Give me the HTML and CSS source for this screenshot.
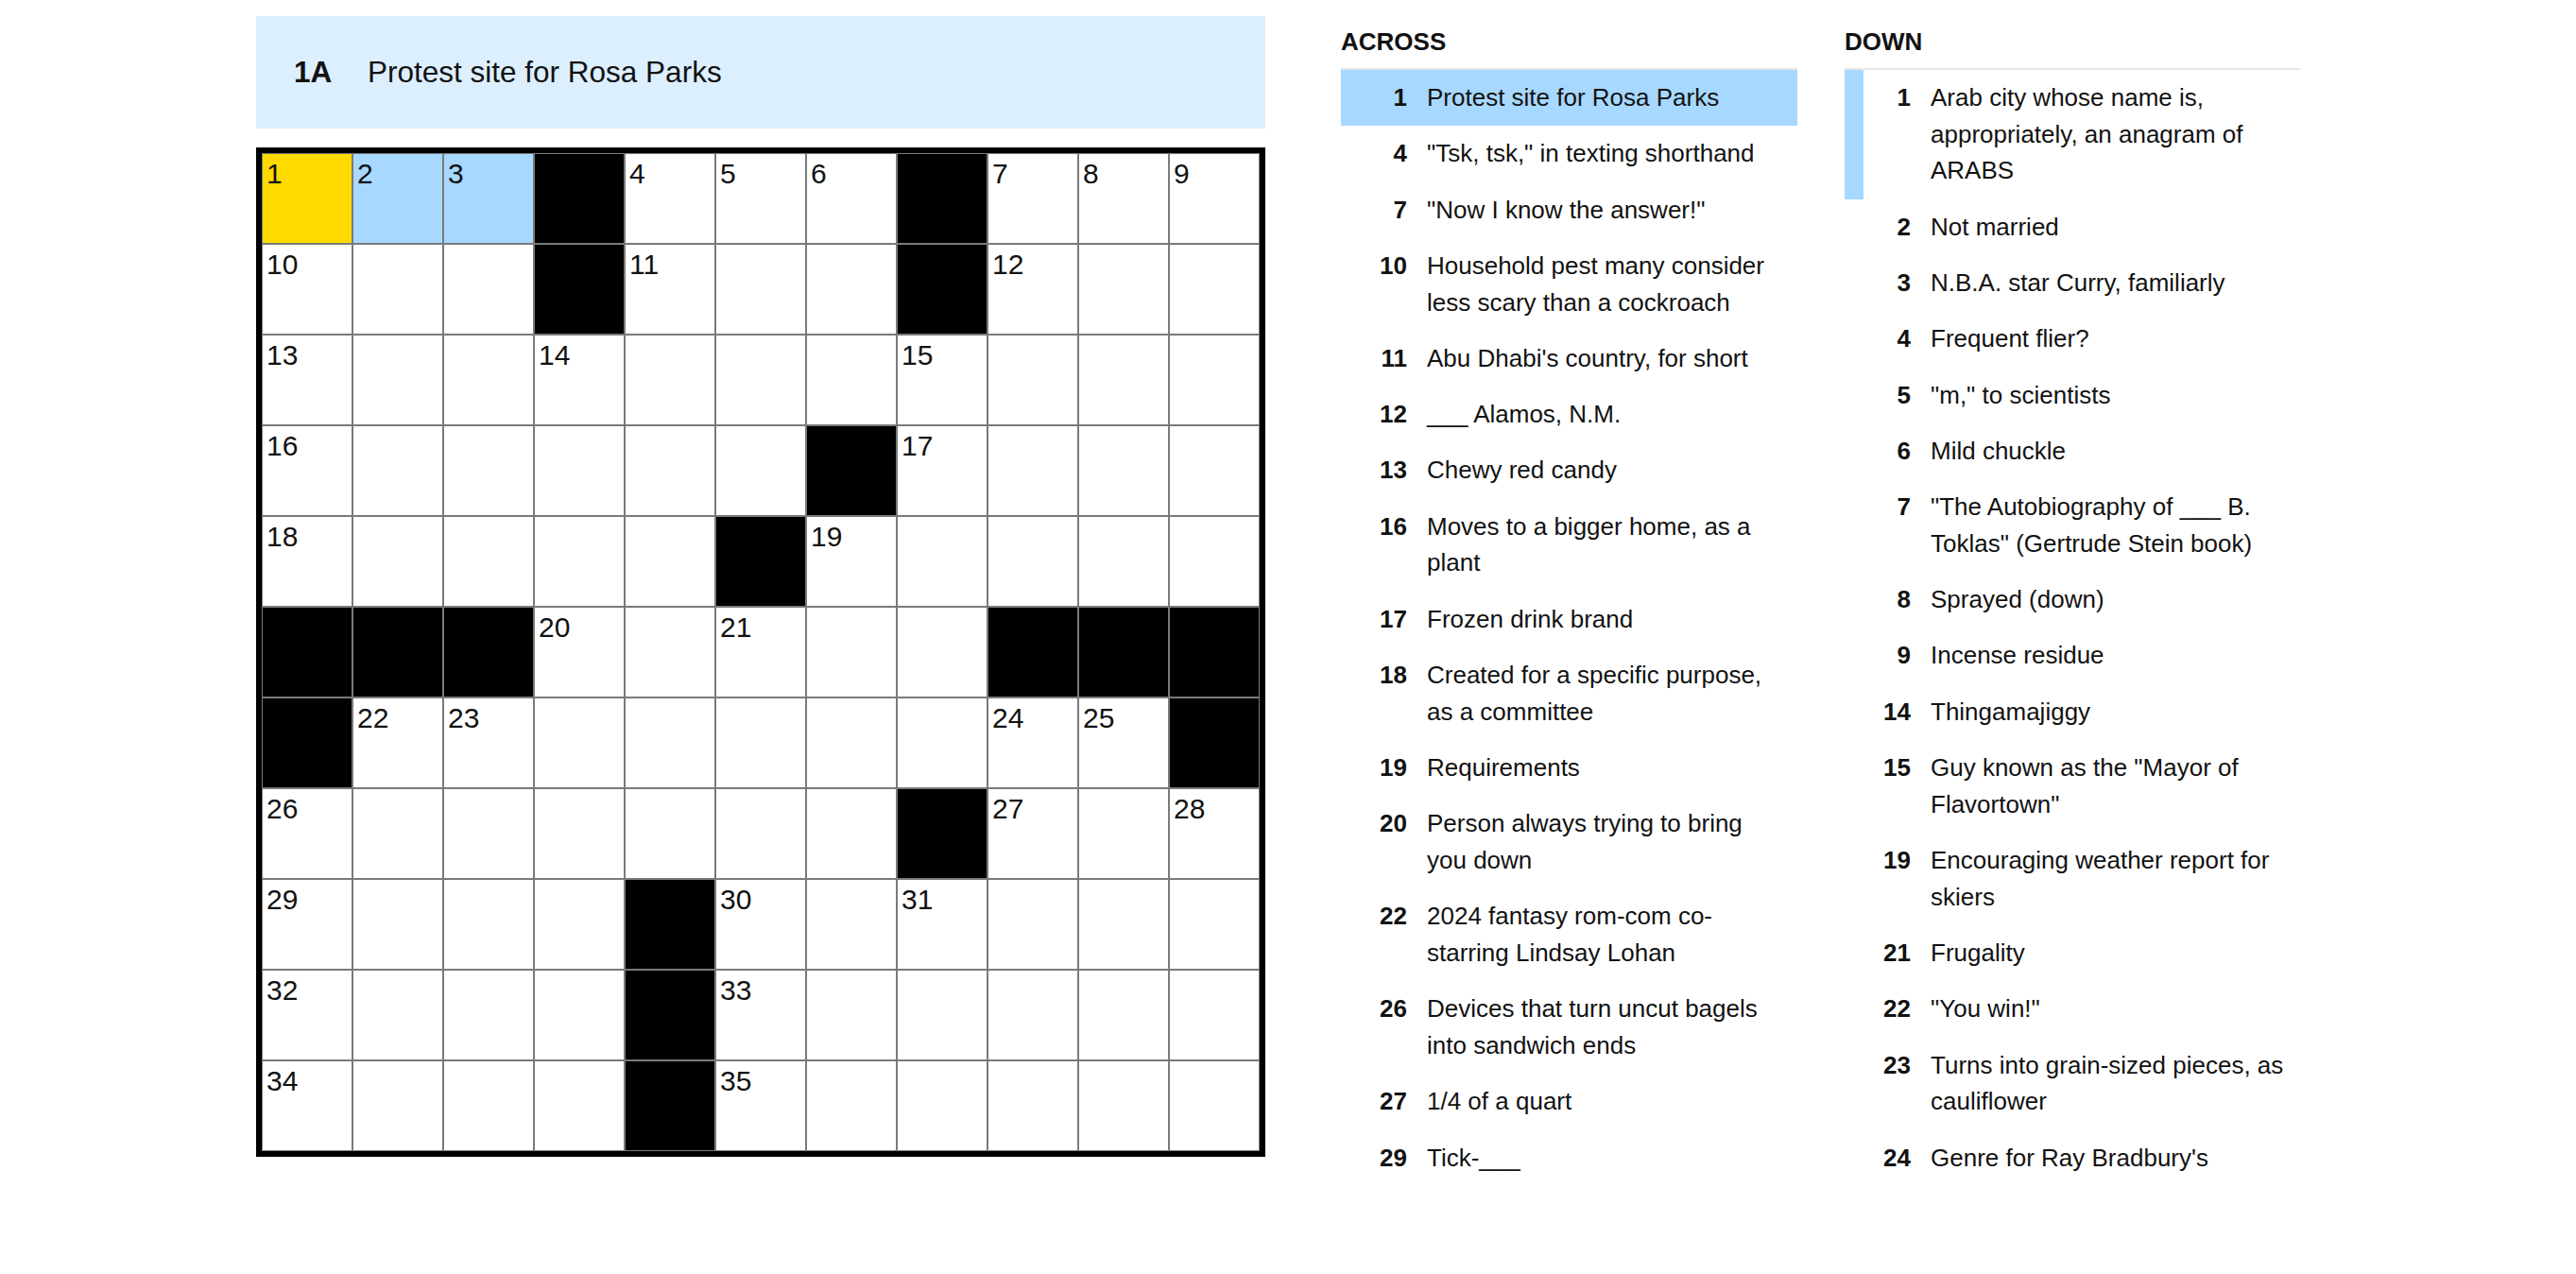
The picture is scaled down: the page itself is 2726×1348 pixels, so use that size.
FILE: index.html
```html
<!DOCTYPE html>
<html lang="en">
<head>
    <meta charset="UTF-8">
    <meta name="viewport" content="width=device-width, initial-scale=1.0">
    <title>Crossword</title>

    <link rel="stylesheet" href="styles.css">
</head>
<body>
    <div class="layout">
        <div class="board">
            <div class="clue-bar">
                <span class="clue-bar-num">1A</span>
                <span class="clue-bar-text">Protest site for Rosa Parks</span>
            </div>
            <div class="grid" id="grid"></div>
        </div>

        <section class="clue-list">
            <h3>ACROSS</h3>
            <ol>
                <li class="selected"><span class="num">1</span><span class="text">Protest site for Rosa Parks</span></li>
                <li><span class="num">4</span><span class="text">"Tsk, tsk," in texting shorthand</span></li>
                <li><span class="num">7</span><span class="text">"Now I know the answer!"</span></li>
                <li><span class="num">10</span><span class="text">Household pest many consider less scary than a cockroach</span></li>
                <li><span class="num">11</span><span class="text">Abu Dhabi's country, for short</span></li>
                <li><span class="num">12</span><span class="text">___ Alamos, N.M.</span></li>
                <li><span class="num">13</span><span class="text">Chewy red candy</span></li>
                <li><span class="num">16</span><span class="text">Moves to a bigger home, as a plant</span></li>
                <li><span class="num">17</span><span class="text">Frozen drink brand</span></li>
                <li><span class="num">18</span><span class="text">Created for a specific purpose, as a committee</span></li>
                <li><span class="num">19</span><span class="text">Requirements</span></li>
                <li><span class="num">20</span><span class="text">Person always trying to bring you down</span></li>
                <li><span class="num">22</span><span class="text">2024 fantasy rom-com co-starring Lindsay Lohan</span></li>
                <li><span class="num">26</span><span class="text">Devices that turn uncut bagels into sandwich ends</span></li>
                <li><span class="num">27</span><span class="text">1/4 of a quart</span></li>
                <li><span class="num">29</span><span class="text">Tick-___</span></li>
            </ol>
        </section>

        <section class="clue-list">
            <h3>DOWN</h3>
            <ol>
                <li class="crossing"><span class="num">1</span><span class="text">Arab city whose name is, appropriately, an anagram of ARABS</span></li>
                <li><span class="num">2</span><span class="text">Not married</span></li>
                <li><span class="num">3</span><span class="text">N.B.A. star Curry, familiarly</span></li>
                <li><span class="num">4</span><span class="text">Frequent flier?</span></li>
                <li><span class="num">5</span><span class="text">"m," to scientists</span></li>
                <li><span class="num">6</span><span class="text">Mild chuckle</span></li>
                <li><span class="num">7</span><span class="text">"The Autobiography of ___ B. Toklas" (Gertrude Stein book)</span></li>
                <li><span class="num">8</span><span class="text">Sprayed (down)</span></li>
                <li><span class="num">9</span><span class="text">Incense residue</span></li>
                <li><span class="num">14</span><span class="text">Thingamajiggy</span></li>
                <li><span class="num">15</span><span class="text">Guy known as the "Mayor of Flavortown"</span></li>
                <li><span class="num">19</span><span class="text">Encouraging weather report for skiers</span></li>
                <li><span class="num">21</span><span class="text">Frugality</span></li>
                <li><span class="num">22</span><span class="text">"You win!"</span></li>
                <li><span class="num">23</span><span class="text">Turns into grain-sized pieces, as cauliflower</span></li>
                <li><span class="num">24</span><span class="text">Genre for Ray Bradbury's</span></li>
            </ol>
        </section>
    </div>

    <script>
        // '#' = black square
        const rows = [
            "...#...#...",
            "...#...#...",
            "...........",
            "......#....",
            ".....#.....",
            "###.....###",
            "#.........#",
            ".......#...",
            "....#......",
            "....#......",
            "....#......"
        ];
        const grid = document.getElementById("grid");
        const isOpen = (r, c) => r >= 0 && r < 11 && c >= 0 && c < 11 && rows[r][c] !== "#";

        let n = 1;
        rows.forEach((row, r) => {
            for (let c = 0; c < 11; c++) {
                const cell = document.createElement("div");
                cell.className = "cell";
                if (!isOpen(r, c)) {
                    cell.classList.add("black");
                } else {
                    const across = !isOpen(r, c - 1) && isOpen(r, c + 1);
                    const down = !isOpen(r - 1, c) && isOpen(r + 1, c);
                    if (across || down) {
                        cell.innerHTML = `<span class="cell-num">${n}</span>`;
                        n++;
                    }
                    if (r === 0 && c === 0) cell.classList.add("active");
                    else if (r === 0 && c < 3) cell.classList.add("word");
                }
                grid.appendChild(cell);
            }
        });
    </script>
</body>
</html>
```

FILE: styles.css
```css
* {
    margin: 0;
    padding: 0;
    box-sizing: border-box;
}
body {
    font-family: "Liberation Sans", Arial, sans-serif;
    color: #121212;
    background-color: #fff;
}
.layout {
    display: flex;
    align-items: flex-start;
    padding: 17px 0 0 271px;
}
.board {
    width: 1068px;
    margin-right: 80px;
}
.clue-bar {
    height: 119px;
    background-color: #dcefff;
    display: flex;
    align-items: center;
    padding-left: 40px;
    font-size: 31.5px;
}
.clue-bar-num {
    width: 78px;
    font-weight: bold;
}
.grid {
    margin-top: 20px;
    display: grid;
    grid-template-columns: repeat(11, 96px);
    width: 1068px;
    border: 6px solid #000;
}
.cell {
    height: 96px;
    border: 1px solid #7a7a7a;
    background-color: #fff;
    font-size: 30px;
    line-height: 30px;
    padding: 6px 0 0 4px;
}
.cell.black {
    background-color: #000;
}
.cell.active {
    background-color: #ffda00;
}
.cell.word {
    background-color: #a7d8ff;
}
.clue-list {
    width: 483px;
}
.clue-list + .clue-list {
    width: 482px;
    margin-left: 50px;
}
.clue-list h3 {
    font-size: 26px;
    line-height: 26px;
    padding: 14px 0 15px;
    border-bottom: 2px solid #e6e6e6;
}
.clue-list ol {
    list-style: none;
    height: 1175px;
    overflow: hidden;
}
.clue-list li {
    display: flex;
    padding: 10px 14px 10.6px 20px;
    font-size: 26px;
    line-height: 38.7px;
}
.clue-list .num {
    flex: none;
    width: 50px;
    margin-right: 21px;
    text-align: right;
    font-weight: bold;
}
.clue-list .text {
    width: 378px;
}
.clue-list li.selected {
    background-color: #a7d8ff;
}
.clue-list li.crossing {
    box-shadow: inset 20px 0 0 #a7d8ff;
}
```
